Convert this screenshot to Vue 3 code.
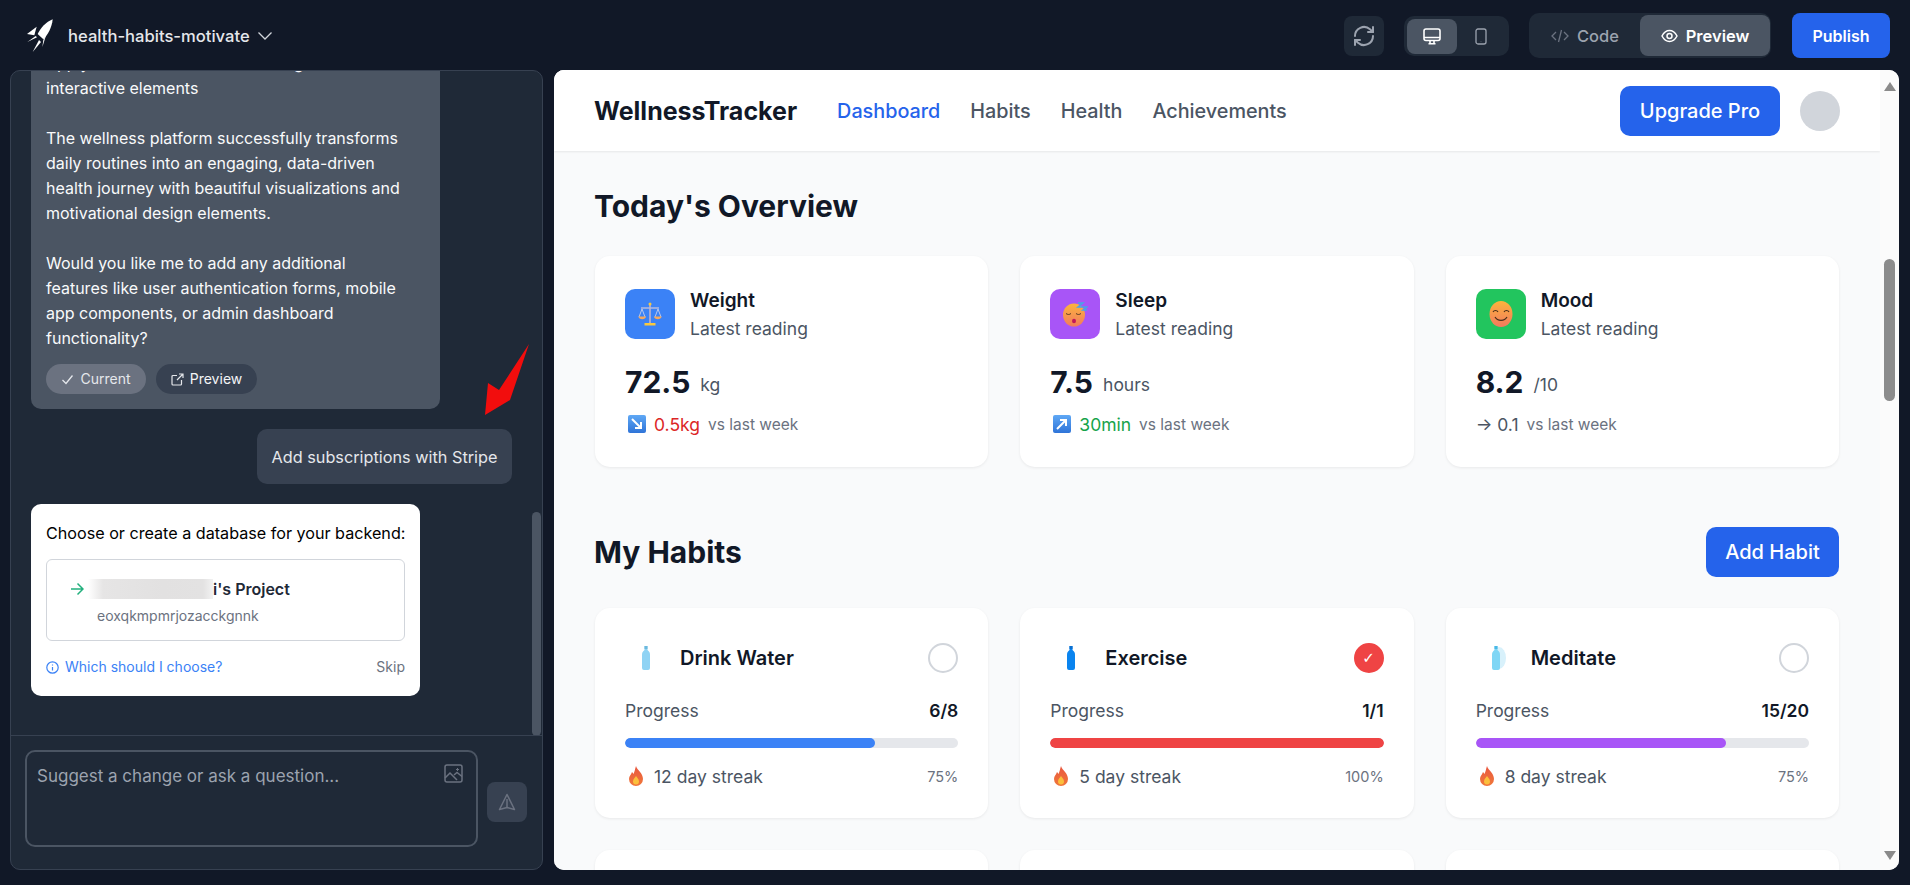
<script setup>
const stats = [
  { t: 'Weight', icon: 'scale', bg: '#3b82f6', v: '72.5', u: 'kg', arrow: 'down', d: '0.5kg', cls: 'red' },
  { t: 'Sleep', icon: 'sleep', bg: '#a855f7', v: '7.5', u: 'hours', arrow: 'up', d: '30min', cls: 'green' },
  { t: 'Mood', icon: 'smile', bg: '#22c55e', v: '8.2', u: '/10', arrow: 'flat', d: '→ 0.1', cls: 'gray' }
]
const habits = [
  { t: 'Drink Water', icon: '#8fd3f4', cap: '#6db9dd', p: '6/8', pct: 75, color: '#3b82f6', s: '12 day streak', done: false },
  { t: 'Exercise', icon: '#0a84ef', cap: '#0a6fd0', p: '1/1', pct: 100, color: '#ef4444', s: '5 day streak', done: true },
  { t: 'Meditate', icon: '#7fd6f5', cap: '#49b8e6', p: '15/20', pct: 75, color: '#a855f7', s: '8 day streak', done: false, glow: true }
]
</script>

<template>
  <div class="app">
    <header class="top">
      <div class="brand">
        <svg class="logo" viewBox="0 0 90 105" fill="#fff">
          <path d="M80 4C78 28 66 50 52 64L35 48C44 30 60 12 80 4Z" />
          <path d="M32 26L3 48L25 52Z" />
          <path d="M62 46L52 66L49 88Z" />
          <path d="M4 72L29 54L33 58Z" />
          <path d="M20 102L39 66L45 72Z" />
        </svg>
        <span class="proj">health-habits-motivate</span>
        <svg class="chev" viewBox="0 0 16 10" fill="none" stroke="#d1d5db" stroke-width="1.3"><path d="M1.5 1.5L8 8l6.5-6.5" /></svg>
      </div>
      <div class="tools">
        <button class="tool-btn">
          <svg width="24" height="24" viewBox="0 0 24 24" fill="none" stroke="#9ca3af" stroke-width="2" stroke-linecap="round" stroke-linejoin="round"><path d="M3 12a9 9 0 0 1 15-6.7L21 8" /><path d="M21 3v5h-5" /><path d="M21 12a9 9 0 0 1-15 6.7L3 16" /><path d="M8 16H3v5" /></svg>
        </button>
        <div class="devices">
          <span class="dev active">
            <svg width="18" height="17" viewBox="0 0 18 17" fill="none" stroke="#fff" stroke-width="1.6"><rect x="1" y="1" width="16" height="11.5" rx="2" /><path d="M1 9.5h16M7 12.5v3M11 12.5v3M5.5 15.8h7" /></svg>
          </span>
          <span class="dev">
            <svg width="12" height="17" viewBox="0 0 12 17" fill="none" stroke="#9ca3af" stroke-width="1.3"><rect x="1" y="1" width="10" height="15" rx="2" /><path d="M6 13.2v.3" /></svg>
          </span>
        </div>
        <div class="modes">
          <span class="mode">
            <svg width="18" height="14" viewBox="0 0 18 14" fill="none" stroke="#6b7280" stroke-width="1.3"><path d="M5 3L1 7l4 4M13 3l4 4-4 4M10.5 1l-3 12" /></svg>
            Code
          </span>
          <span class="mode on">
            <svg width="17" height="14" viewBox="0 0 17 14" fill="none" stroke="#fff" stroke-width="1.5"><path d="M1 7c2-3.8 4.500-5.500 7.500-5.500S14 3.200 16 7c-2 3.800-4.500 5.500-7.500 5.500S3 10.800 1 7Z" /><circle cx="8.500" cy="7" r="2.500" /></svg>
            Preview
          </span>
        </div>
        <button class="publish">Publish</button>
      </div>
    </header>

    <div class="body">
      <aside class="chat">
        <div class="feed">
          <div class="msg">
            <p>Apply smooth transitions and long<br />interactive elements</p>
            <p>The wellness platform successfully transforms daily routines into an engaging, data-driven health journey with beautiful visualizations and motivational design elements.</p>
            <p>Would you like me to add any additional features like user authentication forms, mobile app components, or admin dashboard functionality?</p>
            <div class="pills">
              <span class="pill cur">
                <svg width="13" height="11" viewBox="0 0 13 11" fill="none" stroke="#e5e7eb" stroke-width="1.3"><path d="M1.500 6l3.500 3.500L11.500 1.500" /></svg>
                Current
              </span>
              <span class="pill pre">
                <svg width="13" height="13" viewBox="0 0 13 13" fill="none" stroke="#e5e7eb" stroke-width="1.200"><path d="M6 2.500H2a1 1 0 0 0-1 1V11a1 1 0 0 0 1 1h7.500a1 1 0 0 0 1-1V7M8 1h4v4M12 1L6 7" /></svg>
                Preview
              </span>
            </div>
          </div>
          <div class="user-row"><div class="user">Add subscriptions with Stripe</div></div>
          <div class="db">
            <div class="db-title">Choose or create a database for your backend:</div>
            <div class="db-box">
              <div class="db-name">
                <svg width="14" height="14" viewBox="0 0 14 14" fill="none" stroke="#22b07d" stroke-width="1.500"><path d="M1 7h12M7.500 1.500L13 7l-5.500 5.500" /></svg>
                <span class="blur"></span>
                <span>i's Project</span>
              </div>
              <div class="db-id">eoxqkmpmrjozacckgnnk</div>
            </div>
            <div class="db-foot">
              <span class="why">
                <svg width="13" height="13" viewBox="0 0 13 13" fill="none" stroke="#3b82f6" stroke-width="1.200"><circle cx="6.500" cy="6.500" r="5.700" /><path d="M6.500 6v3.500M6.500 3.500v1" /></svg>
                Which should I choose?
              </span>
              <span class="skip">Skip</span>
            </div>
          </div>
          <div class="feed-bar"></div>
        </div>
        <div class="composer">
          <div class="input">
            <span>Suggest a change or ask a question...</span>
            <svg width="19" height="19" viewBox="0 0 19 19" fill="none" stroke="#6b7280" stroke-width="1.500"><rect x="1" y="1" width="17" height="17" rx="2" /><path d="M1 14l5-5 7 7M10 11l3-2.500 5 4" /><path d="M13.500 4v3M12 5.500h3" stroke-width="1" /></svg>
          </div>
          <button class="send">
            <svg width="18" height="18" viewBox="0 0 18 18" fill="none" stroke="#6b7280" stroke-width="1.500" stroke-linejoin="round"><path d="M9 1.500L16.500 16.500L9 14.500L1.500 16.500Z" /><path d="M9 6v8" /></svg>
          </button>
        </div>
      </aside>

      <section class="preview">
        <div class="page">
          <nav class="nav">
            <div class="nav-left">
              <strong class="wt">WellnessTracker</strong>
              <a class="link active">Dashboard</a>
              <a class="link">Habits</a>
              <a class="link">Health</a>
              <a class="link">Achievements</a>
            </div>
            <div class="nav-right">
              <button class="primary up">Upgrade Pro</button>
              <span class="avatar"></span>
            </div>
          </nav>
          <main class="content">
            <h1 class="h-first">Today's Overview</h1>
            <div class="grid">
              <article v-for="c in stats" :key="c.t" class="card stat">
                <div class="stat-head">
                  <span class="stat-icon" :style="{ background: c.bg }">
                    <svg v-if="c.icon === 'scale'" width="24" height="24" viewBox="0 0 24 24">
                      <path d="M12 1v20" stroke="#a4a9d6" stroke-width="2" />
                      <path d="M3 6h18" stroke="#b4b8dc" stroke-width="1.500" />
                      <path d="M4 7L1 15M4 7l3 8M20 7l-3 8M20 7l3 8" stroke="#d5d7ea" stroke-width=".8" fill="none" />
                      <path d="M.5 14.500h7.500c0 3.500-7.500 3.500-7.500 0ZM16 14.500h7.500c0 3.500-7.500 3.500-7.500 0Z" fill="#f6a95e" />
                      <path d="M6.500 21h11v2.500h-11Z" fill="#f8c93e" />
                      <circle cx="12" cy="2" r="1.500" fill="#f8c93e" />
                    </svg>
                    <svg v-else-if="c.icon === 'sleep'" width="26" height="26" viewBox="0 0 26 26">
                      <defs><linearGradient id="fa" x1="0" y1="0" x2="0" y2="1"><stop offset="0" stop-color="#fcb43c" /><stop offset="1" stop-color="#f27a5e" /></linearGradient></defs>
                      <ellipse cx="12" cy="14" rx="11" ry="11.500" fill="url(#fa)" />
                      <path d="M4 12.500c1.500 1.300 3.500 1.300 5 0M14 12.500c1.500 1.300 3.500 1.300 5 0" stroke="#5b3a22" stroke-width="1" fill="none" />
                      <ellipse cx="12" cy="20" rx="2" ry="2.300" fill="#c2185b" />
                      <path d="M16 2h5l-5 4h5M21 6h4l-4 3h4" stroke="#4aa3e8" stroke-width="1.500" fill="none" />
                    </svg>
                    <svg v-else width="24" height="26" viewBox="0 0 24 26">
                      <defs><linearGradient id="fb" x1="0" y1="0" x2="0" y2="1"><stop offset="0" stop-color="#fcb43c" /><stop offset="1" stop-color="#f27a5e" /></linearGradient></defs>
                      <ellipse cx="12" cy="13" rx="11.500" ry="13" fill="url(#fb)" />
                      <path d="M4 11c1-2 4-2 5 0M15 11c1-2 4-2 5 0" stroke="#4a2e1a" stroke-width="1.100" fill="none" />
                      <path d="M6 16c2.500 4.500 9.500 4.500 12 0" stroke="#4a2e1a" stroke-width="1.200" fill="none" />
                    </svg>
                  </span>
                  <div>
                    <div class="stat-t">{{ c.t }}</div>
                    <div class="stat-s">Latest reading</div>
                  </div>
                </div>
                <div class="stat-v"><b>{{ c.v }}</b><span>{{ c.u }}</span></div>
                <div class="delta">
                  <svg v-if="c.arrow !== 'flat'" class="arrow" width="18" height="18" viewBox="0 0 18 18">
                    <defs><linearGradient id="ab" x1="0" y1="0" x2="0" y2="1"><stop offset="0" stop-color="#5fa8f5" /><stop offset="1" stop-color="#2f74d8" /></linearGradient></defs>
                    <rect width="18" height="18" rx="2" fill="url(#ab)" />
                    <path v-if="c.arrow === 'down'" d="M4 4l8 8M13 7v6H7" stroke="#fff" stroke-width="2" fill="none" />
                    <path v-else d="M4 14l8-8M7 5h6v6" stroke="#fff" stroke-width="2" fill="none" />
                  </svg>
                  <span class="d-val" :class="c.cls">{{ c.d }}</span>
                  <span class="d-note">vs last week</span>
                </div>
              </article>
            </div>

            <div class="habits-head">
              <h1>My Habits</h1>
              <button class="primary add">Add Habit</button>
            </div>
            <div class="grid">
              <article v-for="h in habits" :key="h.t" class="card habit">
                <div class="habit-head">
                  <div class="habit-name">
                    <span class="bottle">
                      <svg width="26" height="26" viewBox="0 0 26 26">
                        <ellipse v-if="h.glow" cx="16" cy="13" rx="7" ry="11" fill="#d8f1fb" />
                        <path d="M11.500 1h3v4c2 1.500 2.500 3 2.500 5v13a2 2 0 0 1-2 2h-4a2 2 0 0 1-2-2V10c0-2 .5-3.500 2.500-5Z" :fill="h.icon" />
                        <path d="M11.500 1h3v3h-3Z" :fill="h.cap" />
                      </svg>
                    </span>
                    <span class="habit-t">{{ h.t }}</span>
                  </div>
                  <span class="ring" :class="{ done: h.done }">
                    <template v-if="h.done">✓</template>
                  </span>
                </div>
                <div class="prog-row"><span>Progress</span><b>{{ h.p }}</b></div>
                <div class="bar"><div class="fill" :style="{ width: h.pct + '%', background: h.color }"></div></div>
                <div class="streak-row">
                  <span class="streak">
                    <svg width="16" height="22" viewBox="0 0 16 22">
                      <defs><linearGradient id="fi" x1="0" y1="0" x2="0" y2="1"><stop offset="0" stop-color="#e9573f" /><stop offset="1" stop-color="#f0783a" /></linearGradient></defs>
                      <path d="M8 1c1 4 7 7 7 13a7 7 0 0 1-14 0c0-3 2-4 3-7 1 1 1.500 2 1.500 2C6.500 7 7 4 8 1Z" fill="url(#fi)" />
                      <path d="M8 11c1 2 3 3 3 5.500a3 3 0 0 1-6 0C5 14 7 13 8 11Z" fill="#fbbf3c" />
                    </svg>
                    {{ h.s }}
                  </span>
                  <span class="pct">{{ h.pct }}%</span>
                </div>
              </article>
            </div>
            <div class="grid next">
              <article v-for="n in 3" :key="n" class="card stub"></article>
            </div>
          </main>
        </div>
        <div class="sbar">
          <span class="tri"></span>
          <span class="thumb"></span>
          <span class="tri dn"></span>
        </div>
      </section>
    </div>

    <svg class="annot" width="50" height="76" viewBox="0 0 50 76"><path d="M47 1L28 57L3 72L6 40L17 47Z" fill="#f20d0d" /></svg>
  </div>
</template>

<style>
html, body { margin: 0; background: #111827; }
</style>

<style scoped>
* { box-sizing: border-box; }
.app { position: relative; width: 1910px; height: 885px; overflow: hidden; background: #111827; font-family: Inter, "Liberation Sans", sans-serif; display: flex; flex-direction: column; }
button { font-family: inherit; border: 0; cursor: pointer; }
.top { height: 70px; flex: none; display: flex; justify-content: space-between; align-items: center; padding: 1px 20px 0 26px; }
.brand { display: flex; align-items: center; }
.logo { width: 30px; height: 35px; margin-top: -1px; }
.proj { margin-left: 12px; color: #e5e7eb; font-size: 16.6px; font-weight: 500; }
.chev { width: 16px; height: 10px; margin-left: 7px; }
.tools { display: flex; align-items: center; }
.tool-btn { width: 40px; height: 40px; border-radius: 8px; background: #1f2937; display: flex; align-items: center; justify-content: center; padding: 0; }
.devices { margin-left: 20px; width: 105px; height: 40px; border-radius: 10px; background: #1f2937; padding: 3px; display: flex; }
.dev { flex: 1; display: flex; align-items: center; justify-content: center; border-radius: 8px; height: 35px; }
.dev.active { background: #4b5563; }
.modes { margin-left: 20px; width: 242px; height: 45px; border-radius: 10px; background: #1f2937; display: flex; padding: 2px 1px; align-items: stretch; }
.mode { width: 110px; display: flex; align-items: center; justify-content: center; gap: 8px; color: #9ca3af; font-size: 16.5px; font-weight: 500; border-radius: 8px; }
.mode.on { width: 130px; background: #4b5563; color: #fff; font-weight: 600; }
.publish { margin-left: 21px; width: 98px; height: 45px; border-radius: 8px; background: #2563eb; color: #fff; font-size: 16px; font-weight: 600; }

.body { height: 800px; flex: none; display: flex; gap: 11px; padding-left: 10px; }
.chat { width: 533px; height: 800px; background: #1f2937; border: 1px solid #374151; border-radius: 10px; overflow: hidden; display: flex; flex-direction: column; }
.feed { position: relative; height: 665px; flex: none; display: flex; flex-direction: column; justify-content: flex-end; overflow: hidden; padding: 0 30px 39px 20px; border-bottom: 1px solid #374151; }
.msg { flex: none; width: 409px; background: #4b5563; color: #f9fafb; border-radius: 10px; padding: 0 34px 15px 15px; font-size: 16px; line-height: 25px; }
.msg p { margin: 0 0 25px; }
.msg p:nth-of-type(3) { margin-bottom: 13px; }
.pills { display: flex; gap: 10px; margin-right: -19px; }
.pill { height: 30px; border-radius: 15px; display: flex; align-items: center; justify-content: center; gap: 6px; font-size: 14px; line-height: 30px; color: #e5e7eb; }
.pill.cur { width: 100px; background: #6b7280; }
.pill.pre { width: 101px; background: #374151; color: #f3f4f6; }
.user-row { display: flex; justify-content: flex-end; margin-top: 20px; flex: none; }
.user { width: 255px; height: 55px; background: #374151; color: #e5e7eb; border-radius: 10px; display: flex; align-items: center; justify-content: center; font-size: 16.25px; white-space: nowrap; }
.db { flex: none; margin-top: 20px; width: 389px; height: 192px; background: #fff; border-radius: 10px; padding: 15px; color: #000; }
.db-title { font-size: 16.15px; line-height: 28px; white-space: nowrap; }
.db-box { margin-top: 12px; height: 82px; border: 1px solid #d1d5db; border-radius: 6px; padding: 19px 0 0 23px; }
.db-name { display: flex; align-items: center; height: 20px; font-size: 16px; font-weight: 600; color: #1f2937; white-space: nowrap; }
.blur { width: 125px; height: 20px; margin-left: 4px; background: linear-gradient(90deg, #fff 0, #e6e5e5 12%, #e2e1e1 60%, #e3e2e2 92%, #f2f2f2 100%); }
.db-id { margin: 8px 0 0 27px; color: #6b7280; font-size: 14px; line-height: 18px; }
.db-foot { display: flex; justify-content: space-between; align-items: center; margin-top: 15px; font-size: 14px; line-height: 22px; }
.why { display: flex; align-items: center; gap: 6px; color: #3b82f6; }
.skip { color: #6b7280; }
.feed-bar { position: absolute; right: 1px; top: 441px; width: 9px; height: 224px; border-radius: 5px; background: #4b5563; }
.composer { flex: 1; display: flex; align-items: flex-start; padding: 14px 14px 0 14px; }
.input { width: 453px; height: 97px; border: 2px solid #4b5563; border-radius: 10px; padding: 12px 13px 0 10px; display: flex; justify-content: space-between; color: #9ca3af; font-size: 17px; line-height: 24px; }
.send { width: 40px; height: 40px; margin: 32px 0 0 9px; border-radius: 8px; background: #374151; display: flex; align-items: center; justify-content: center; padding: 0; }

.preview { width: 1345px; height: 800px; border-radius: 10px; overflow: hidden; display: flex; background: #fbfbfb; }
.page { flex: 1; min-width: 0; background: #f9fafb; overflow: hidden; }
.nav { height: 81px; background: #fff; display: flex; justify-content: space-between; align-items: center; padding: 0 40px 0 40px; box-shadow: 0 1px 2px rgba(0,0,0,.08); position: relative; }
.nav-left { display: flex; align-items: center; }
.wt { font-size: 25px; font-weight: 700; color: #111827; margin-right: 40px; }
.link { font-size: 19.8px; font-weight: 500; color: #4b5563; margin-right: 30px; }
.link.active { color: #2563eb; }
.nav-right { display: flex; align-items: center; gap: 20px; }
.primary { background: #2563eb; color: #fff; font-weight: 500; font-size: 20px; border-radius: 10px; }
.up { width: 160px; height: 50px; }
.avatar { width: 40px; height: 40px; border-radius: 50%; background: #d1d5db; }
.content { padding: 0 41px; }
h1 { margin: 0 0 0 -1px; font-size: 30px; line-height: 36px; font-weight: 700; color: #111827; }
.h-first { margin: 37px 0 32px -1px; }
.grid { display: grid; grid-template-columns: repeat(3, 1fr); gap: 32px; }
.card { background: #fff; border-radius: 15px; box-shadow: 0 1px 3px rgba(0,0,0,.07); }
.stat { height: 211px; padding: 33px 30px 0; }
.stat-head { display: flex; gap: 15px; height: 50px; }
.stat-icon { width: 50px; height: 50px; border-radius: 10px; display: flex; align-items: center; justify-content: center; }
.stat-t { font-size: 19px; font-weight: 600; color: #111827; line-height: 24px; }
.stat-s { font-size: 17.5px; color: #4b5563; line-height: 24px; margin-top: 4px; }
.stat-v { margin-top: 24px; height: 38px; display: flex; align-items: center; }
.stat-v b { font-size: 30px; font-weight: 700; color: #111827; }
.stat-v span { font-size: 17.5px; color: #4b5563; margin: 5px 0 0 10px; }
.delta { margin-top: 10px; height: 26px; display: flex; align-items: center; font-size: 17.5px; }
.arrow { margin: 0 8px 0 3px; }
.d-val.red { color: #dc2626; }
.d-val.green { color: #16a34a; }
.d-val.gray { color: #4b5563; }
.d-note { font-size: 15.5px; color: #6b7280; margin-left: 8px; }
.habits-head { margin-top: 60px; height: 50px; display: flex; justify-content: space-between; align-items: center; margin-bottom: 31px; }
.add { width: 133px; height: 50px; }
.habit { height: 210px; padding: 35px 30px 0; }
.habit-head { display: flex; justify-content: space-between; align-items: center; height: 30px; }
.habit-name { display: flex; align-items: center; gap: 14px; }
.bottle { width: 41px; height: 30px; display: flex; align-items: center; justify-content: center; }
.habit-t { font-size: 20px; font-weight: 600; color: #111827; }
.ring { width: 30px; height: 30px; border-radius: 50%; border: 2px solid #d1d5db; display: flex; align-items: center; justify-content: center; color: #fff; font-family: "DejaVu Sans", sans-serif; font-size: 15px; }
.ring.done { background: #ef4444; border-color: #ef4444; }
.prog-row { margin-top: 26px; display: flex; justify-content: space-between; font-size: 17.5px; line-height: 24px; color: #4b5563; }
.prog-row b { font-weight: 600; color: #111827; }
.bar { margin-top: 15px; height: 10px; border-radius: 5px; background: #e5e7eb; overflow: hidden; }
.fill { height: 10px; border-radius: 5px; }
.streak-row { margin-top: 16px; height: 24px; display: flex; justify-content: space-between; align-items: center; }
.streak { display: flex; align-items: center; gap: 10px; padding-left: 3px; font-size: 17.5px; color: #4b5563; }
.pct { font-size: 14.5px; color: #6b7280; }
.next { margin-top: 32px; }
.stub { height: 210px; }

.sbar { width: 19px; flex: none; position: relative; background: #fbfbfb; }
.thumb { position: absolute; left: 4px; top: 189px; width: 11px; height: 142px; border-radius: 6px; background: #8c8c8c; }
.tri { position: absolute; left: 4px; top: 12px; border-left: 6px solid transparent; border-right: 6px solid transparent; border-bottom: 9px solid #8a8a8a; }
.tri.dn { top: 781px; border-bottom: 0; border-top: 9px solid #8a8a8a; }
.annot { position: absolute; left: 482px; top: 343px; }
</style>
